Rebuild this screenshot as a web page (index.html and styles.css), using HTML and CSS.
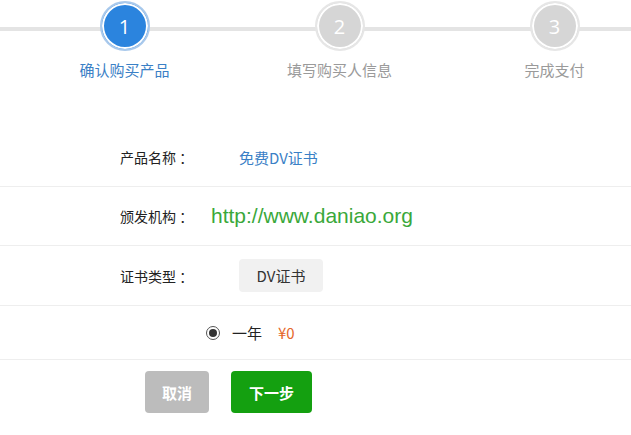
FILE: index.html
```html
<!DOCTYPE html>
<html lang="zh-CN">
<head>
<meta charset="utf-8">
<title>确认购买产品</title>
<link rel="stylesheet" href="styles.css">
</head>
<body>
<div class="steps">
  <div class="step active">
    <div class="circle">1</div>
    <div class="step-label">确认购买产品</div>
  </div>
  <div class="step">
    <div class="circle">2</div>
    <div class="step-label">填写购买人信息</div>
  </div>
  <div class="step">
    <div class="circle">3</div>
    <div class="step-label">完成支付</div>
  </div>
</div>

<div class="form">
  <div class="row">
    <div class="label">产品名称 ：</div>
    <div class="value product">免费DV证书</div>
  </div>
  <div class="row">
    <div class="label">颁发机构 ：</div>
    <div class="value url">http://www.daniao.org</div>
  </div>
  <div class="row tall">
    <div class="label">证书类型 ：</div>
    <div class="value"><span class="tag">DV证书</span></div>
  </div>
  <div class="row period">
    <span class="radio"><span class="dot"></span></span>
    <span class="period-text">一年</span>
    <span class="price">¥0</span>
  </div>
  <div class="actions">
    <button class="btn cancel">取消</button>
    <button class="btn next">下一步</button>
  </div>
</div>
</body>
</html>
```
FILE: styles.css
```css
* { box-sizing: border-box; }
html, body { margin: 0; padding: 0; background: #fff; }
body {
  font-family: "Microsoft YaHei", "Noto Sans CJK SC", "Noto Sans", sans-serif;
  color: #333;
  overflow: hidden;
  width: 631px;
  height: 435px;
}

.steps {
  position: relative;
  display: grid;
  grid-template-columns: 215px 215px 215px;
  padding-left: 17px;
  padding-top: 1px;
  height: 128px;
}
.steps::before {
  content: "";
  position: absolute;
  left: 0;
  right: 0;
  top: 27px;
  height: 4px;
  background: #e4e4e4;
}
.step {
  position: relative;
  display: flex;
  flex-direction: column;
  align-items: center;
}
.circle {
  width: 50px;
  height: 50px;
  border-radius: 50%;
  border: 2px solid #e6e6e6;
  box-shadow: inset 0 0 0 2px #fff;
  background: #d6d6d6;
  color: #fff;
  font-family: "Open Sans", "Noto Sans", sans-serif;
  font-size: 20px;
  font-weight: 400;
  display: flex;
  align-items: center;
  justify-content: center;
}
.step.active .circle {
  background: #2b84de;
  border-color: #a9c9ec;
}
.step-label {
  margin-top: 9px;
  font-size: 15px;
  line-height: 20px;
  color: #9a9a9a;
  white-space: nowrap;
}
.step.active .step-label { color: #3a80c6; }

.row {
  display: flex;
  align-items: center;
  height: 59px;
  border-bottom: 1px solid #eeeeee;
  padding-left: 120px;
}
.row.tall { height: 60px; }
.label {
  width: 119px;
  font-size: 14px;
  color: #222;
  white-space: nowrap;
}
.value { font-size: 15px; }
.product { color: #3a80c6; }
.url {
  margin-left: -28px;
  font-family: "Liberation Sans", Arial, sans-serif;
  font-size: 21px;
  color: #3aa83a;
}
.tag {
  display: inline-flex;
  align-items: center;
  justify-content: center;
  width: 84px;
  height: 33px;
  background: #f1f1f1;
  border-radius: 4px;
  font-size: 15px;
  color: #333;
}

.period {
  height: 54px;
  padding-left: 206px;
  font-size: 15px;
}
.radio {
  width: 14px;
  height: 14px;
  border-radius: 50%;
  border: 1px solid #555;
  display: inline-flex;
  align-items: center;
  justify-content: center;
  margin-right: 12px;
}
.radio .dot {
  width: 8px;
  height: 8px;
  border-radius: 50%;
  background: #333;
}
.period-text { color: #222; margin-right: 16px; }
.price { color: #e5672a; font-size: 15px; }

.actions {
  display: flex;
  gap: 22px;
  padding-left: 145px;
  margin-top: 11px;
}
.btn {
  height: 42px;
  border: none;
  border-radius: 4px;
  color: #fff;
  font-family: inherit;
  font-size: 15px;
  font-weight: bold;
  padding: 0;
}
.cancel { width: 64px; background: #bcbcbc; }
.next { width: 81px; background: #14a010; }
```
